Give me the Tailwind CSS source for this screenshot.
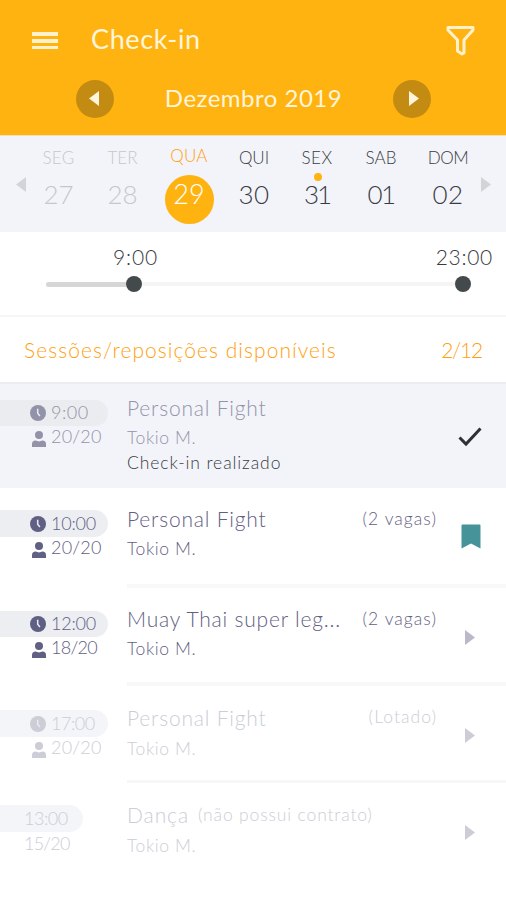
<!DOCTYPE html>
<html lang="pt-BR">
<head>
<meta charset="utf-8">
<title>Check-in</title>
<script src="https://cdn.jsdelivr.net/npm/@tailwindcss/browser@4"></script>
</head>
<body class="bg-white">
<svg class="hidden">
  <symbol id="clock" viewBox="0 0 16 16"><circle cx="8" cy="8" r="8" fill="currentColor"/><path d="M7.7 3.8V8.3L9.9 11" fill="none" stroke="#e9ebf2" stroke-width="1.5"/></symbol>
  <symbol id="user" viewBox="0 0 14 16"><circle cx="7" cy="4" r="4" fill="currentColor"/><path d="M0 16V13.2Q0 9.6 3.6 9.6Q7 11.2 10.4 9.6Q14 9.6 14 13.2V16Z" fill="currentColor"/></symbol>
  <symbol id="arrow" viewBox="0 0 10 15"><path d="M0 0L10 7.5L0 15Z" fill="currentColor"/></symbol>
</svg>
<div class="w-[506px] h-[900px] overflow-hidden bg-white font-['Lato',sans-serif] font-light whitespace-nowrap">

  <header class="h-[135px] bg-[#ffb310] text-[#fff5dc]">
    <div class="flex h-[79px] items-center pl-8 pr-[31px]">
      <div class="flex w-[26px] flex-col gap-[3px] mt-[2px]">
        <i class="h-[4px] bg-[#fff1cc]"></i><i class="h-[4px] bg-[#fff1cc]"></i><i class="h-[3px] bg-[#fff1cc]"></i>
      </div>
      <h1 class="ml-[33px] -mt-[2px] text-[27px] leading-[36px] font-normal tracking-[0.6px]">Check-in</h1>
      <svg class="ml-auto mt-[2px]" width="29" height="31" viewBox="0 0 29 31" fill="none" stroke="#fff1cc" stroke-width="3" stroke-linejoin="round"><path d="M2 2.5H27V5L18 15V28L16 29L11.5 26V15L2 5Z"/></svg>
    </div>
    <div class="flex h-[39px] items-center pl-[76px] pr-[75px]">
      <div class="flex size-[38px] items-center justify-center rounded-full bg-[#c48b12] pr-[3px]"><svg class="rotate-180 text-[#fff5dc]" width="10" height="15"><use href="#arrow"/></svg></div>
      <div class="-mt-[2px] flex-1 text-center text-[24px] leading-[38px] font-normal tracking-[0.5px]">Dezembro 2019</div>
      <div class="flex size-[38px] items-center justify-center rounded-full bg-[#c48b12] pl-[3px]"><svg class="text-[#fff5dc]" width="10" height="15"><use href="#arrow"/></svg></div>
    </div>
  </header>

  <section class="flex h-[97px] border-t border-[#fbdcb8] bg-[#f3f4f9] text-center text-[#383b42]">
    <div class="w-[26px] pl-4 pt-[41px] text-[#d3d4d8]"><svg class="rotate-180" width="10" height="15"><use href="#arrow"/></svg></div>
    <div class="w-[65px] pt-[10px] text-[#c6c7cc]"><div class="text-[17px] leading-6 tracking-[0.3px]">SEG</div><div class="mt-[9px] text-[26px] leading-[30px]">27</div></div>
    <div class="w-[63px] pt-[10px] text-[#c6c7cc]"><div class="text-[17px] leading-6">TER</div><div class="mt-[9px] text-[26px] leading-[30px]">28</div></div>
    <div class="flex w-[70px] flex-col items-center pt-[8px]"><div class="text-[17px] leading-6 tracking-[0.3px] text-[#ff9f10]">QUA</div><div class="mt-[7px] size-[49px] rounded-full bg-[#ffb310] pt-[4px] text-[27px] leading-[30px] text-white">29</div></div>
    <div class="w-[60px] pt-[10px]"><div class="text-[17px] leading-6">QUI</div><div class="mt-[9px] text-[26px] leading-[30px] tracking-[0.3px]">30</div></div>
    <div class="relative w-[66px] pt-[10px]"><div class="text-[17px] leading-6 tracking-[0.5px]">SEX</div><div class="mt-[9px] text-[26px] leading-[30px] tracking-[-2px]">31</div><i class="absolute left-[30px] top-[37px] size-2 rounded-full bg-[#ffb310]"></i></div>
    <div class="w-[62px] pt-[10px]"><div class="text-[17px] leading-6">SAB</div><div class="mt-[9px] text-[26px] leading-[30px] tracking-[-1.5px]">01</div></div>
    <div class="w-[72px] pt-[10px]"><div class="text-[17px] leading-6 tracking-[-0.5px]">DOM</div><div class="mt-[9px] text-[26px] leading-[30px] tracking-[0.3px]">02</div></div>
    <div class="-ml-[3px] pt-[41px] text-[#d3d4d8]"><svg width="10" height="15"><use href="#arrow"/></svg></div>
  </section>

  <section class="h-[85px] border-b-2 border-[#f6f6f6] pt-[11px] text-[#383b42]">
    <div class="flex justify-between pl-[113px] pr-[13px] text-[21px] leading-7"><span class="tracking-[0.9px]">9:00</span><span class="tracking-[0.7px]">23:00</span></div>
    <div class="ml-[46px] mr-[35px] mt-[5px] flex h-4 items-center">
      <i class="h-[5px] w-[80px] rounded-l-full bg-[#d6d6d6]"></i>
      <i class="size-4 rounded-full bg-[#444a4c]"></i>
      <i class="h-[4px] flex-1 bg-[#f5f5f5]"></i>
      <i class="size-4 rounded-full bg-[#444a4c]"></i>
    </div>
  </section>

  <section class="flex h-[65px] items-center justify-between pl-6 pr-6 text-[21px] text-[#ff9f10]"><span class="tracking-[1.05px]">Sessões/reposições disponíveis</span><span class="tracking-[-1.2px]">2/12</span></section>

  <main>
    <article class="flex h-[106px] border-t-2 border-[#ebecf0] bg-[#f3f4f9] text-[#9293a9]">
      <div class="w-[127px] pt-4">
        <div class="flex h-[26px] w-[108px] items-center rounded-r-full bg-[#ebecef] pl-[30px] text-[18px]"><svg width="16" height="16"><use href="#clock"/></svg><span class="-mt-px ml-[5px] tracking-[0.5px]">9:00</span></div>
        <div class="-mt-px flex pl-8 text-[18px] leading-[22px]"><svg class="mt-[6px]" width="14" height="16"><use href="#user"/></svg><span class="ml-[5px] tracking-[0.2px]">20/20</span></div>
      </div>
      <div class="flex-1 pt-[10px]"><div class="text-[21px] leading-7 tracking-[0.8px]">Personal Fight</div><div class="mt-[2px] text-[17.5px] leading-7 tracking-[0.6px]">Tokio M.</div><div class="-mt-px text-[17.5px] leading-6 tracking-[0.9px] text-[#383b42]">Check-in realizado</div></div>
      <svg class="mr-6 mt-[43px]" width="24" height="20" viewBox="0 0 24 20" fill="none" stroke="#2d3034" stroke-width="3"><path d="M1.5 10.5L8 17L22.5 1.5"/></svg>
    </article>

    <article class="flex h-[100px] text-[#5f6083]">
      <div class="w-[127px] pt-[22px]">
        <div class="flex h-[27px] w-[108px] items-center rounded-r-full bg-[#eceef1] pl-[30px] text-[18px]"><svg width="16" height="16"><use href="#clock"/></svg><span class="-mt-px ml-[5px] tracking-[-0.2px]">10:00</span></div>
        <div class="-mt-px flex pl-8 text-[18px] leading-[22px]"><svg class="mt-[6px]" width="14" height="16"><use href="#user"/></svg><span class="ml-[5px] tracking-[0.2px]">20/20</span></div>
      </div>
      <div class="flex flex-1 border-b-4 border-[#f8f8f9]">
        <div class="flex-1 pt-[17px]"><div class="text-[21px] leading-7 tracking-[0.8px]">Personal Fight</div><div class="mt-[2px] text-[17.5px] leading-7 tracking-[0.6px]">Tokio M.</div></div>
        <div class="pt-[17px] text-[17.5px] leading-7 tracking-[1.05px]">(2 vagas)</div>
        <svg class="ml-6 mr-[25px] mt-[36px] text-[#46939a]" width="20" height="25" viewBox="0 0 20 25"><path d="M1.5 .5H18.500Q19.500 .5 19.500 1.500V24.500L10 19.500L.5 24.500V1.500Q.5 .5 1.500 .5Z" fill="currentColor"/></svg>
      </div>
    </article>

    <article class="flex h-[98px] text-[#5f6083]">
      <div class="w-[127px] pt-[23px]">
        <div class="flex h-[26px] w-[108px] items-center rounded-r-full bg-[#eceef1] pl-[30px] text-[18px]"><svg width="16" height="16"><use href="#clock"/></svg><span class="-mt-px ml-[5px] tracking-[-0.2px]">12:00</span></div>
        <div class="-mt-px flex pl-8 text-[18px] leading-[22px]"><svg class="mt-[6px]" width="14" height="16"><use href="#user"/></svg><span class="ml-[5px] tracking-[-0.7px]">18/20</span></div>
      </div>
      <div class="flex flex-1 border-b-4 border-[#f8f8f9]">
        <div class="flex-1 pt-[17px]"><div class="text-[21px] leading-7 tracking-[0.8px]">Muay Thai super leg...</div><div class="mt-[2px] text-[17.5px] leading-7 tracking-[0.6px]">Tokio M.</div></div>
        <div class="pt-[17px] text-[17.5px] leading-7 tracking-[1.05px]">(2 vagas)</div>
        <svg class="ml-[28px] mr-[31px] mt-[42px] text-[#b9b9ca]" width="10" height="15"><use href="#arrow"/></svg>
      </div>
    </article>

    <article class="flex h-[97px] text-[#cccdd6]">
      <div class="w-[127px] pt-6">
        <div class="flex h-[27px] w-[108px] items-center rounded-r-full bg-[#f3f5f9] pl-[30px] text-[18px]"><svg width="16" height="16"><use href="#clock"/></svg><span class="-mt-px ml-[5px] tracking-[-0.5px]">17:00</span></div>
        <div class="-mt-px flex pl-8 text-[18px] leading-[22px]"><svg class="mt-[6px]" width="14" height="16"><use href="#user"/></svg><span class="ml-[5px] tracking-[0.2px]">20/20</span></div>
      </div>
      <div class="flex flex-1 border-b-[3px] border-[#f6f7f9]">
        <div class="flex-1 pt-[18px]"><div class="text-[21px] leading-7 tracking-[0.8px]">Personal Fight</div><div class="mt-[3px] text-[17.5px] leading-7 tracking-[0.6px]">Tokio M.</div></div>
        <div class="pt-[17px] text-[17.5px] leading-7 tracking-[1.05px]">(Lotado)</div>
        <svg class="ml-[28px] mr-[31px] mt-[42px]" width="10" height="15"><use href="#arrow"/></svg>
      </div>
    </article>

    <article class="flex h-[117px] text-[#cccdd6]">
      <div class="w-[127px] pt-[22px]">
        <div class="flex h-[27px] w-[83px] items-center rounded-r-full bg-[#f3f5f9] pl-6 text-[18px] tracking-[-0.5px]">13:00</div>
        <div class="pl-6 text-[18px] leading-[22px] tracking-[-0.8px]">15/20</div>
      </div>
      <div class="flex-1 pt-[18px]"><div class="flex leading-7"><span class="text-[21px] tracking-[0.9px]">Dança</span><span class="ml-[9px] text-[17.5px] tracking-[0.85px]">(não possui contrato)</span></div><div class="mt-[3px] text-[17.5px] leading-7 tracking-[0.6px]">Tokio M.</div></div>
      <svg class="mr-[31px] mt-[42px]" width="10" height="15"><use href="#arrow"/></svg>
    </article>
  </main>
</div>
</body>
</html>
